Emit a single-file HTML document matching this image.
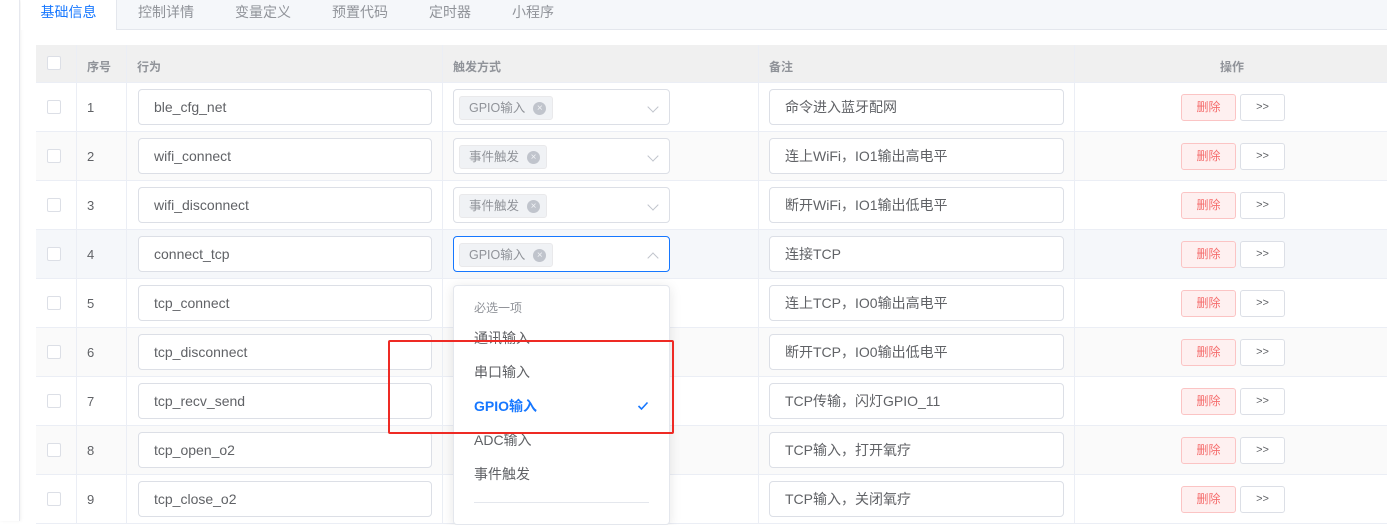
<!DOCTYPE html>
<html><head><meta charset="utf-8"><style>
*{box-sizing:border-box;margin:0;padding:0}
body{width:1387px;height:521px;overflow:hidden;background:#fff;font-family:"Liberation Sans","Noto Sans CJK SC",sans-serif;font-size:14px;color:#606266;position:relative}
.a{position:absolute}
.gut{left:0;top:0;width:20px;height:521px;background:#fff;border-right:1px solid #e6e8ee;box-shadow:1px 0 3px rgba(0,0,0,.06)}
.tabs{left:21px;top:0;right:0;height:30px;background:#f5f7fa;border-bottom:1px solid #e4e7ed}
.tab{position:absolute;top:0;height:30px;line-height:24px;font-size:14px;color:#909399}
.tab.act{background:#fff;color:#1677ff;height:30px;border-right:1px solid #e4e7ed;text-align:center}
.hdr{left:36px;top:45px;width:1351px;height:38px;background:#f0f0f0;border-bottom:1px solid #ebeef5;font-size:12px;font-weight:bold;color:#909399}
.hdr span{position:absolute;top:13px}
.row{left:36px;width:1351px;height:49px;border-bottom:1px solid #ebeef5}
.vl{position:absolute;top:0;bottom:0;width:1px;background:#ebeef5}
.cb{position:absolute;left:11px;top:17px;width:14px;height:14px;border:1px solid #dcdfe6;border-radius:2px;background:#fff}
.num{position:absolute;left:51px;top:17px;font-size:13px}
.inp{position:absolute;top:6px;height:36px;border:1px solid #dcdfe6;border-radius:4px;background:#fff;padding-left:15px;line-height:34px;font-size:14px;color:#606266;white-space:nowrap}
.sel{position:absolute;left:417px;top:6px;width:217px;height:36px;border:1px solid #dcdfe6;border-radius:4px;background:#fff}
.tag{position:absolute;left:5px;top:6px;height:24px;background:#f0f2f5;border:1px solid #e9e9eb;border-radius:3px;font-size:12.5px;color:#909399;line-height:22px;padding:0 27px 0 9px}
.tag i{position:absolute;right:6px;top:5px;width:13px;height:13px;border-radius:50%;background:#c0c4cc;color:#f0f2f5;font-style:normal;font-size:10px;line-height:13px;text-align:center}
.arr{position:absolute;right:12px;top:13px;width:8px;height:8px;border-right:1px solid #c0c4cc;border-bottom:1px solid #c0c4cc;transform:rotate(45deg)}
.arr.up{transform:rotate(-135deg);top:17px}
.del{position:absolute;left:1145px;top:11px;width:55px;height:27px;border:1px solid #fbc4c4;background:#fef0f0;color:#f56c6c;border-radius:3px;font-size:12px;text-align:center;line-height:25px}
.nx{position:absolute;left:1204px;top:11px;width:45px;height:27px;border:1px solid #dcdfe6;background:#fff;color:#606266;border-radius:3px;font-size:11px;text-align:center;line-height:25px}
.dd{left:453px;top:285px;width:217px;height:240px;background:#fff;border:1px solid #e4e7ed;border-radius:4px;box-shadow:0 2px 12px rgba(0,0,0,.1)}
.dd .it{position:absolute;left:20px;font-size:14px;color:#606266}
</style></head><body>
<div class="a gut"></div>
<div class="a tabs">
<div class="tab act" style="left:0;width:96px">基础信息</div>
<div class="tab" style="left:117px">控制详情</div>
<div class="tab" style="left:214px">变量定义</div>
<div class="tab" style="left:311px">预置代码</div>
<div class="tab" style="left:408px">定时器</div>
<div class="tab" style="left:491px">小程序</div>
</div>
<div class="a hdr">
<div class="cb" style="top:11px"></div>
<div class="vl" style="left:40px"></div><div class="vl" style="left:90px"></div><div class="vl" style="left:406px"></div><div class="vl" style="left:722px"></div><div class="vl" style="left:1038px"></div>
<span style="left:51px">序号</span><span style="left:101px">行为</span><span style="left:417px">触发方式</span><span style="left:733px">备注</span><span style="left:1184px">操作</span>
</div>

<div class="a row" style="top:83px;background:#fff"><div class="vl" style="left:40px"></div><div class="vl" style="left:90px"></div><div class="vl" style="left:406px"></div><div class="vl" style="left:722px"></div><div class="vl" style="left:1038px"></div><div class="cb"></div><div class="num">1</div><div class="inp" style="left:102px;width:294px">ble_cfg_net</div><div class="sel"><div class="tag">GPIO输入<i>×</i></div><div class="arr"></div></div><div class="inp" style="left:733px;width:295px">命令进入蓝牙配网</div><div class="del">删除</div><div class="nx">&gt;&gt;</div></div>

<div class="a row" style="top:132px;background:#fafafa"><div class="vl" style="left:40px"></div><div class="vl" style="left:90px"></div><div class="vl" style="left:406px"></div><div class="vl" style="left:722px"></div><div class="vl" style="left:1038px"></div><div class="cb"></div><div class="num">2</div><div class="inp" style="left:102px;width:294px">wifi_connect</div><div class="sel"><div class="tag">事件触发<i>×</i></div><div class="arr"></div></div><div class="inp" style="left:733px;width:295px">连上WiFi，IO1输出高电平</div><div class="del">删除</div><div class="nx">&gt;&gt;</div></div>

<div class="a row" style="top:181px;background:#fff"><div class="vl" style="left:40px"></div><div class="vl" style="left:90px"></div><div class="vl" style="left:406px"></div><div class="vl" style="left:722px"></div><div class="vl" style="left:1038px"></div><div class="cb"></div><div class="num">3</div><div class="inp" style="left:102px;width:294px">wifi_disconnect</div><div class="sel"><div class="tag">事件触发<i>×</i></div><div class="arr"></div></div><div class="inp" style="left:733px;width:295px">断开WiFi，IO1输出低电平</div><div class="del">删除</div><div class="nx">&gt;&gt;</div></div>

<div class="a row" style="top:230px;background:#f5f7fa"><div class="vl" style="left:40px"></div><div class="vl" style="left:90px"></div><div class="vl" style="left:406px"></div><div class="vl" style="left:722px"></div><div class="vl" style="left:1038px"></div><div class="cb"></div><div class="num">4</div><div class="inp" style="left:102px;width:294px">connect_tcp</div><div class="sel" style="border-color:#1677ff"><div class="tag">GPIO输入<i>×</i></div><div class="arr up"></div></div><div class="inp" style="left:733px;width:295px">连接TCP</div><div class="del">删除</div><div class="nx">&gt;&gt;</div></div>

<div class="a row" style="top:279px;background:#fff"><div class="vl" style="left:40px"></div><div class="vl" style="left:90px"></div><div class="vl" style="left:406px"></div><div class="vl" style="left:722px"></div><div class="vl" style="left:1038px"></div><div class="cb"></div><div class="num">5</div><div class="inp" style="left:102px;width:294px">tcp_connect</div><div class="inp" style="left:733px;width:295px">连上TCP，IO0输出高电平</div><div class="del">删除</div><div class="nx">&gt;&gt;</div></div>

<div class="a row" style="top:328px;background:#fafafa"><div class="vl" style="left:40px"></div><div class="vl" style="left:90px"></div><div class="vl" style="left:406px"></div><div class="vl" style="left:722px"></div><div class="vl" style="left:1038px"></div><div class="cb"></div><div class="num">6</div><div class="inp" style="left:102px;width:294px">tcp_disconnect</div><div class="inp" style="left:733px;width:295px">断开TCP，IO0输出低电平</div><div class="del">删除</div><div class="nx">&gt;&gt;</div></div>

<div class="a row" style="top:377px;background:#fff"><div class="vl" style="left:40px"></div><div class="vl" style="left:90px"></div><div class="vl" style="left:406px"></div><div class="vl" style="left:722px"></div><div class="vl" style="left:1038px"></div><div class="cb"></div><div class="num">7</div><div class="inp" style="left:102px;width:294px">tcp_recv_send</div><div class="inp" style="left:733px;width:295px">TCP传输，闪灯GPIO_11</div><div class="del">删除</div><div class="nx">&gt;&gt;</div></div>

<div class="a row" style="top:426px;background:#fafafa"><div class="vl" style="left:40px"></div><div class="vl" style="left:90px"></div><div class="vl" style="left:406px"></div><div class="vl" style="left:722px"></div><div class="vl" style="left:1038px"></div><div class="cb"></div><div class="num">8</div><div class="inp" style="left:102px;width:294px">tcp_open_o2</div><div class="inp" style="left:733px;width:295px">TCP输入，打开氧疗</div><div class="del">删除</div><div class="nx">&gt;&gt;</div></div>

<div class="a row" style="top:475px;background:#fff"><div class="vl" style="left:40px"></div><div class="vl" style="left:90px"></div><div class="vl" style="left:406px"></div><div class="vl" style="left:722px"></div><div class="vl" style="left:1038px"></div><div class="cb"></div><div class="num">9</div><div class="inp" style="left:102px;width:294px">tcp_close_o2</div><div class="inp" style="left:733px;width:295px">TCP输入，关闭氧疗</div><div class="del">删除</div><div class="nx">&gt;&gt;</div></div>

<div class="a dd">
<div class="it" style="top:13px;font-size:12px;color:#909399">必选一项</div>
<div class="it" style="top:42px">通讯输入</div>
<div class="it" style="top:76px">串口输入</div>
<div class="it" style="top:110px;color:#1677ff;font-weight:bold">GPIO输入</div>
<svg class="a" style="left:183px;top:115px" width="12" height="10" viewBox="0 0 12 10"><path d="M1.5 5 L4.5 8 L10.5 1.5" fill="none" stroke="#1677ff" stroke-width="1.6"/></svg>
<div class="it" style="top:144px">ADC输入</div>
<div class="it" style="top:178px">事件触发</div>
<div class="a" style="left:20px;top:216px;width:175px;height:1px;background:#e4e7ed"></div>
</div>
<div class="a" style="left:388px;top:340px;width:286px;height:94px;border:2px solid #ee2a24;border-radius:2px"></div>
</body></html>
